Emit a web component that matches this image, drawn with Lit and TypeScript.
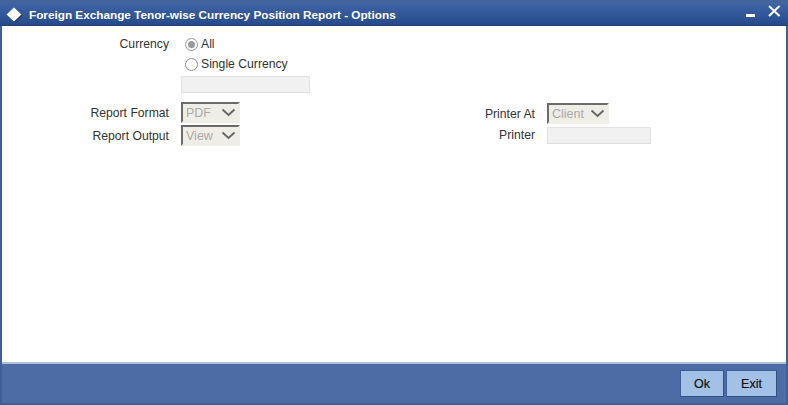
import { LitElement, html, css } from "lit";
import { customElement } from "lit/decorators.js";

const chevron = html`<svg class="chev" width="15" height="9" viewBox="0 0 15 9"><path d="M1.5 1.5 L7.5 7 L13.5 1.5" fill="none" stroke="#666" stroke-width="1.9"/></svg>`;

@customElement("app-root")
export class AppRoot extends LitElement {
  static styles = css`
    :host { display: block; width: 788px; height: 405px; font-family: "Liberation Sans", Arial, sans-serif; font-size: 12.2px; color: #333; }
    .win { width: 788px; height: 405px; box-sizing: border-box; display: flex; flex-direction: column; background: #3c5e99; border: solid #3f5f98; border-width: 0 2px 2px 2px; }
    .title { height: 26px; flex: none; margin: 0 -2px 0 -2px; padding: 0 0 0 6px; box-sizing: border-box; display: flex; align-items: center; gap: 6px; color: #fff; font-weight: bold; font-size: 11.75px; background: linear-gradient(#3f64a4, #2f5597 60%, #274a88 95%, #1c3768); border-top: 3px solid #43639c; }
    .title span { flex: 1; }
    .diamond { flex: none; display: block; }
    .ctl { flex: none; display: block; }
    .ctl.min { margin-top: 3px; margin-right: 4px; }
    .ctl.close { margin-top: -7px; margin-right: 6px; }
    .body { flex: 1; background: #fff; display: flex; padding: 8px 0 0 0; min-height: 0; }
    .col1 { width: 467px; flex: none; display: flex; flex-direction: column; }
    .col2 { display: flex; flex-direction: column; padding-top: 68px; }
    .row { display: flex; align-items: center; height: 20px; }
    .lab { width: 167px; text-align: right; margin-right: 11px; flex: none; }
    .col1 .sel { margin-left: 1px; }
    .col2 .lab { width: 66px; margin-right: 12px; text-align: right; }
    .rad { flex: none; width: 13px; height: 13px; border: 1px solid #8f8f8f; border-radius: 50%; box-sizing: border-box; margin: 0 3px 0 5px; background: #fff; display: flex; align-items: center; justify-content: center; }
    .rad.on { border-color: #999; }
    .rad.on::after { content: ""; width: 7px; height: 7px; border-radius: 50%; background: #999; }
    .inp { box-sizing: border-box; height: 17px; background: #f1f1f1; border: 1px solid #e3e3e3; border-bottom-color: #ddd; }
    .inp.w1 { width: 129px; margin-left: 179px; }
    .inp.w2 { width: 104px; }
    .spacer { height: 7px; }
    .sel { box-sizing: border-box; width: 59px; height: 21px; background: #efeee6; border: 2px solid; border-color: #6a6a6a #efeee6 #efeee6 #6a6a6a; color: #aaa; display: flex; align-items: center; justify-content: space-between; padding: 0 2px 0 3px; font-size: 12.5px; }
    .sel.s3 { width: 62px; }
    .selrow { height: 23px; }
    .foot { flex: none; height: 41px; background: #4d6ca6; border-top: 2px solid #b3c1d8; box-sizing: border-box; display: flex; justify-content: flex-end; align-items: center; gap: 2px; padding: 0 9px 0 0; }
    .btn { box-sizing: border-box; height: 27px; background: #a3c1e6; border: 1px solid; border-color: #3c5e99 #33517f #33517f #3c5e99; color: #111; font-size: 12.5px; font-weight: 400; display: flex; align-items: center; justify-content: center; padding: 0; -webkit-text-stroke: 0.2px #111; }
    .ok { width: 44px; }
    .exit { width: 51px; }
  `;

  render() {
    return html`<div class="win">
      <div class="title">
        <svg class="diamond" width="17" height="16" viewBox="0 0 17 16"><path d="M9 1.5 L16.5 8.5 L9 15.5 L1.5 8.5 Z" fill="#1c3768"/><path d="M8 0.5 L15.5 7.5 L8 14.5 L0.5 7.5 Z" fill="#fff"/></svg>
        <span>Foreign Exchange Tenor-wise Currency Position Report - Options</span>
        <svg class="ctl min" width="12" height="6" viewBox="0 0 12 6"><rect x="1" y="1" width="9" height="3" fill="#fff"/></svg>
        <svg class="ctl close" width="15" height="14" viewBox="0 0 15 14"><path d="M2 2 L12.5 12 M12.5 2 L2 12" stroke="#fff" stroke-width="2" fill="none"/></svg>
      </div>
      <div class="body">
        <div class="col1">
          <div class="row"><div class="lab">Currency</div><div class="rad on"></div><div>All</div></div>
          <div class="row"><div class="lab"></div><div class="rad"></div><div>Single Currency</div></div>
          <div class="row"><div class="inp w1"></div></div>
          <div class="spacer"></div>
          <div class="row selrow"><div class="lab">Report Format</div><div class="sel">PDF ${chevron}</div></div>
          <div class="row selrow"><div class="lab">Report Output</div><div class="sel">View ${chevron}</div></div>
        </div>
        <div class="col2">
          <div class="row selrow"><div class="lab">Printer At</div><div class="sel s3">Client ${chevron}</div></div>
          <div class="row"><div class="lab">Printer</div><div class="inp w2"></div></div>
        </div>
      </div>
      <div class="foot">
        <div class="btn ok">Ok</div>
        <div class="btn exit">Exit</div>
      </div>
    </div>`;
  }
}
